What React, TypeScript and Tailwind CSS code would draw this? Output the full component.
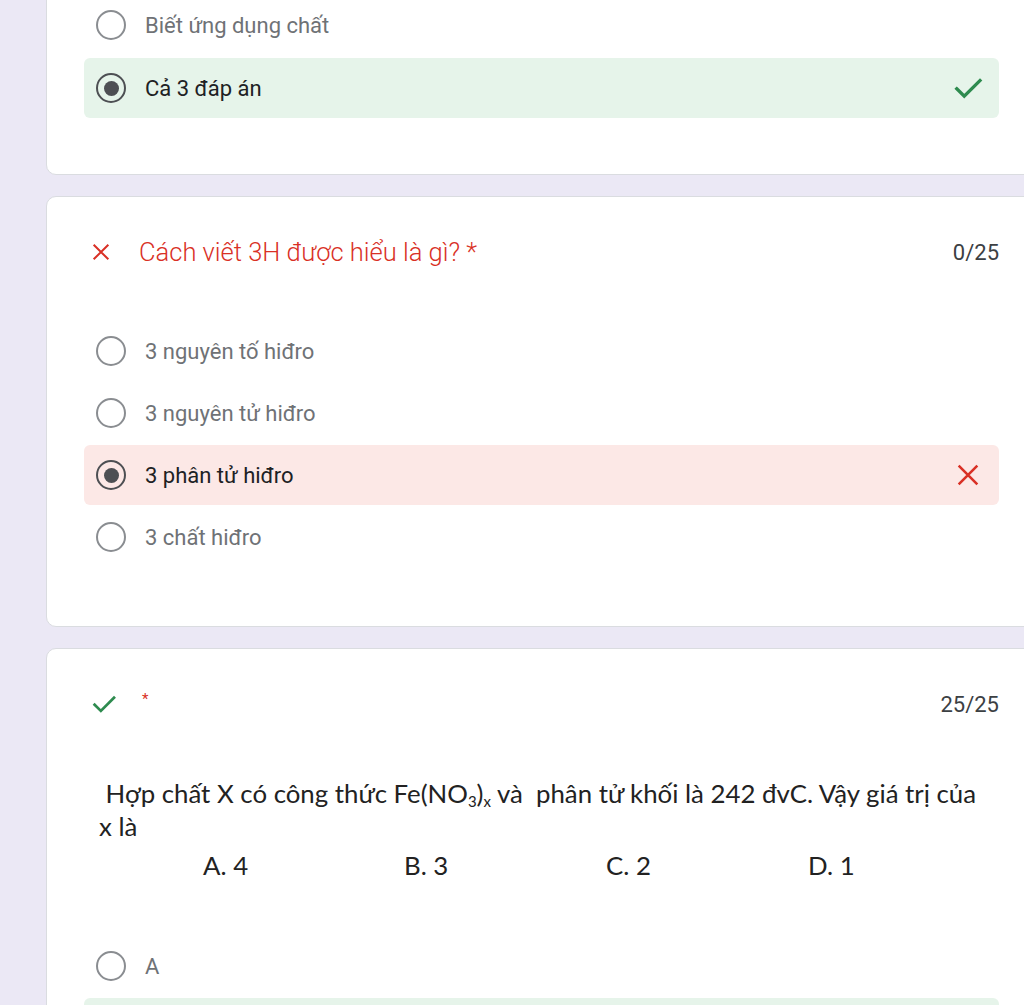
import React from "react";

function Radio({ checked }: { checked?: boolean }) {
  return (
    <div
      className={
        "flex h-[30px] w-[30px] shrink-0 items-center justify-center rounded-full border-[2.5px] " +
        (checked ? "border-[#4d4f53]" : "border-[#8a8d91]")
      }
    >
      {checked && <div className="h-[15px] w-[15px] rounded-full bg-[#4d4f53]" />}
    </div>
  );
}

function CheckIcon({ className }: { className?: string }) {
  return (
    <svg viewBox="0 0 24 24" className={className} fill="none" stroke="currentColor" strokeWidth="2.2" strokeLinecap="square">
      <path d="M4.5 12.5l5 5L20 7" />
    </svg>
  );
}

function XIcon({ className }: { className?: string }) {
  return (
    <svg viewBox="0 0 24 24" className={className} fill="none" stroke="currentColor" strokeWidth="2.2">
      <path d="M4 4l16 16M20 4L4 20" />
    </svg>
  );
}

function Option({
  label,
  checked,
  status,
}: {
  label: string;
  checked?: boolean;
  status?: "ok" | "bad";
}) {
  const bg = status === "ok" ? "bg-[#e6f4ea]" : status === "bad" ? "bg-[#fce8e6]" : "";
  return (
    <div className={"flex h-[60px] items-center rounded-[6px] pl-[12px] pr-[13px] " + bg}>
      <Radio checked={checked} />
      <span
        className={
          "ml-[19px] flex-1 text-[22px] " + (checked ? "text-[#202124]" : "text-[#6f7276]")
        }
      >
        {label}
      </span>
      {status === "ok" && <CheckIcon className="h-[36px] w-[36px] text-[#2e8b4f]" />}
      {status === "bad" && <XIcon className="h-[28px] w-[28px] text-[#d93025] mr-[4px]" />}
    </div>
  );
}

export default function App() {
  return (
    <div
      className="h-[1005px] w-[1024px] overflow-hidden bg-[#ebe8f5]"
      style={{ fontFamily: "Roboto, 'Noto Sans', sans-serif" }}
    >
      <div className="flex flex-col gap-[21px] pl-[46px]">
        {/* Card 1 */}
        <div className="mt-[-40px] w-[1000px] rounded-[10px] border border-[#dadce0] bg-white pb-[56px] pt-[34px]">
          <div className="flex w-[952px] flex-col gap-[3px] pl-[37px]">
            <Option label="Biết ứng dụng chất" />
            <Option label="Cả 3 đáp án" checked status="ok" />
          </div>
        </div>

        {/* Card 2 */}
        <div className="w-[1000px] rounded-[10px] border border-[#dadce0] bg-white pb-[59px] pt-[40px]">
          <div className="flex h-[30px] w-[952px] items-center pl-[43px]">
            <XIcon className="h-[22px] w-[22px] text-[#d93025]" />
            <span className="ml-[27px] flex-1 text-[25.5px] font-light text-[#d93025]">
              Cách viết 3H được hiểu là gì? *
            </span>
            <span className="text-[22px] text-[#3c4043]">0/25</span>
          </div>
          <div className="mt-[54px] flex w-[952px] flex-col gap-[2px] pl-[37px]">
            <Option label="3 nguyên tố hiđro" />
            <Option label="3 nguyên tử hiđro" />
            <Option label="3 phân tử hiđro" checked status="bad" />
            <Option label="3 chất hiđro" />
          </div>
        </div>

        {/* Card 3 */}
        <div className="w-[1000px] rounded-[10px] border border-[#dadce0] bg-white pt-[40px] pb-[40px]">
          <div className="flex h-[30px] w-[952px] items-center pl-[42px]">
            <CheckIcon className="h-[30px] w-[30px] text-[#2e8b4f]" />
            <span className="ml-[23px] mb-[10px] flex-1 text-[15px] text-[#d93025]">*</span>
            <span className="text-[22px] text-[#3c4043]">25/25</span>
          </div>
          <div
            className="mt-[58px] w-[940px] pl-[52px] text-[25.8px] leading-[33px] text-[#222]"
            style={{ fontFamily: "Lato, 'Open Sans', sans-serif" }}
          >
            <p className="whitespace-nowrap">
              {"\u00a0"}Hợp chất X có công thức Fe(NO<sub className="text-[15px]">3</sub>)
              <sub className="text-[15px]">x</sub> và {"\u00a0"}phân tử khối là 242 đvC. Vậy giá trị của
              <br />x là
            </p>
            <div className="mt-[6px] flex pl-[104px]">
              <span className="w-[201px]">A. 4</span>
              <span className="w-[202px]">B. 3</span>
              <span className="w-[202px]">C. 2</span>
              <span>D. 1</span>
            </div>
          </div>
          <div className="mt-[54px] flex w-[952px] flex-col gap-[2px] pl-[37px]">
            <Option label="A" />
            <Option label="" checked status="ok" />
          </div>
        </div>
      </div>
    </div>
  );
}
